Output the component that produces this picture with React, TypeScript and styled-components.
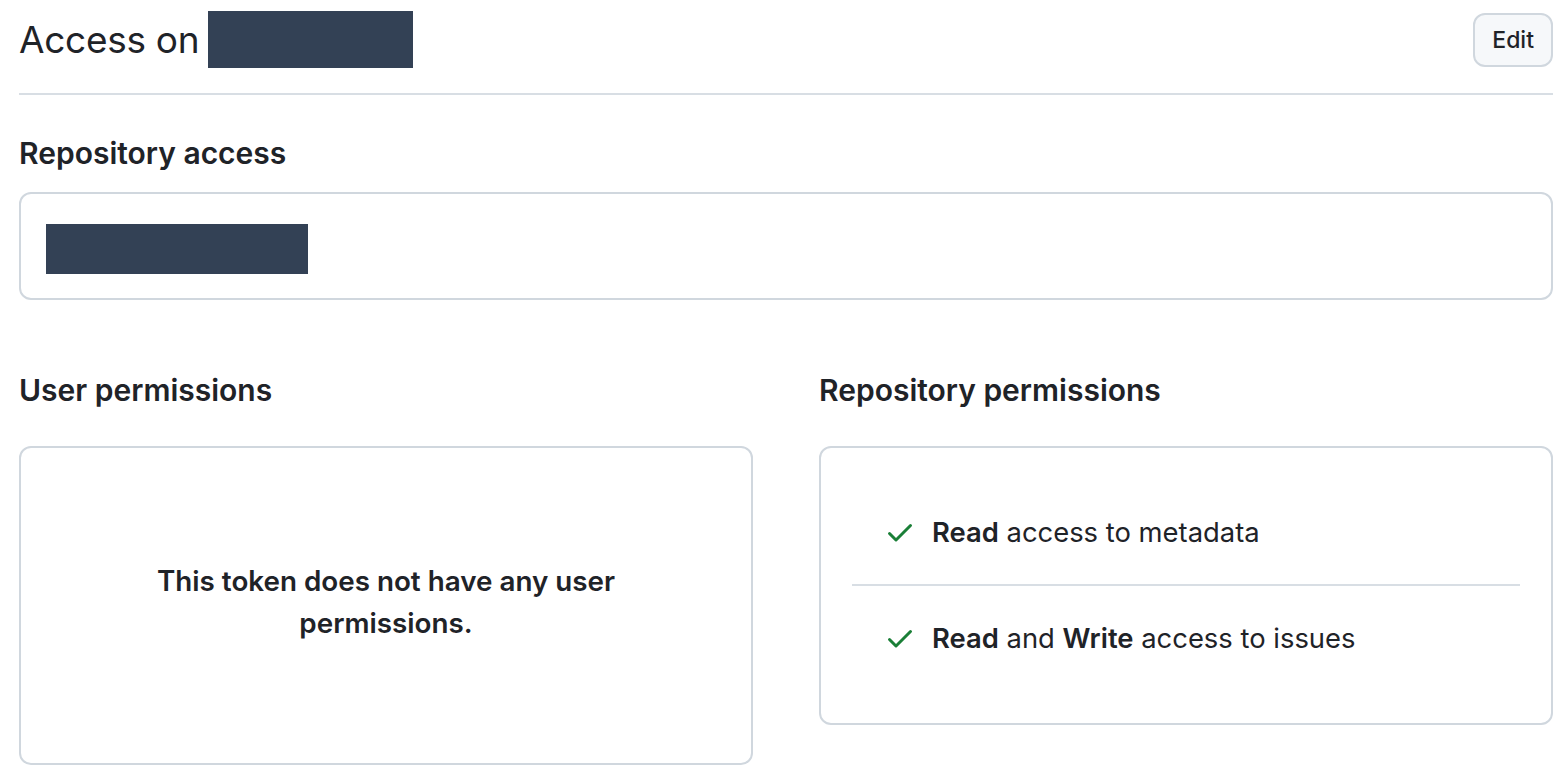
import React from 'react';
import styled, { createGlobalStyle } from 'styled-components';

const GlobalStyle = createGlobalStyle`
  body {
    margin: 0;
    background: #ffffff;
    color: #1f2328;
    font-family: Inter, "Liberation Sans", Arial, sans-serif;
  }
`;

const Page = styled.div`
  padding: 11px 15px 0 19px;
`;

const Header = styled.header`
  display: flex;
  align-items: center;
  justify-content: space-between;
  padding-bottom: 25px;
  border-bottom: 2px solid #d8dee4;
`;

const Title = styled.h1`
  display: flex;
  align-items: center;
  gap: 9px;
  margin: 0;
  font-size: 37px;
  font-weight: 400;
  letter-spacing: -0.3px;
`;

const Redacted = styled.span<{ $w: number; $h: number }>`
  display: block;
  width: ${(p) => p.$w}px;
  height: ${(p) => p.$h}px;
  background: #334155;
`;

const Button = styled.button`
  height: 54px;
  padding: 0 17px;
  border: 2px solid #d0d7de;
  border-radius: 12px;
  background: #f6f8fa;
  color: #1f2328;
  font-family: inherit;
  font-size: 23px;
  font-weight: 500;
`;

const Heading = styled.h2`
  margin: 0;
  font-size: 30px;
  line-height: 36px;
  font-weight: 600;
`;

const Section = styled.section<{ $top: number }>`
  margin-top: ${(p) => p.$top}px;
  display: flex;
  flex-direction: column;
  gap: 21px;
`;

const Box = styled.div`
  border: 2px solid #d0d7de;
  border-radius: 12px;
`;

const RepoBox = styled(Box)`
  padding: 30px 25px 24px;
`;

const Columns = styled.div`
  display: grid;
  grid-template-columns: 1fr 1fr;
  gap: 66px;
  margin-top: 72px;
`;

const Column = styled.div`
  display: flex;
  flex-direction: column;
  gap: 38px;
`;

const EmptyBox = styled(Box)`
  box-sizing: border-box;
  height: 319px;
  display: flex;
  align-items: center;
  justify-content: center;
  text-align: center;
  padding: 0 110px 8px;
  font-size: 27.8px;
  line-height: 42px;
  font-weight: 600;
`;

const List = styled(Box)`
  list-style: none;
  margin: 0;
  padding: 32px 31px 33px;
`;

const Item = styled.li`
  display: flex;
  align-items: center;
  gap: 16px;
  height: 104px;
  padding-left: 32px;
  font-size: 27.4px;
  & + & {
    border-top: 2px solid #d8dee4;
  }
  b {
    font-weight: 600;
  }
`;

const Check = () => (
  <svg width="32" height="32" viewBox="0 0 16 16" fill="#1a7f37" aria-hidden>
    <path d="M13.78 4.22a.75.75 0 0 1 0 1.06l-7.25 7.25a.75.75 0 0 1-1.06 0L2.22 9.28a.751.751 0 0 1 .018-1.042.751.751 0 0 1 1.042-.018L6 10.94l6.72-6.72a.75.75 0 0 1 1.06 0Z" />
  </svg>
);

export default function App() {
  return (
    <>
      <GlobalStyle />
      <Page>
        <Header>
          <Title>
            Access on <Redacted $w={205} $h={57} />
          </Title>
          <Button>Edit</Button>
        </Header>

        <Section $top={40}>
          <Heading>Repository access</Heading>
          <RepoBox>
            <Redacted $w={262} $h={50} />
          </RepoBox>
        </Section>

        <Columns>
          <Column>
            <Heading>User permissions</Heading>
            <EmptyBox>This token does not have any user permissions.</EmptyBox>
          </Column>
          <Column>
            <Heading>Repository permissions</Heading>
            <List as="ul">
              <Item>
                <Check />
                <span>
                  <b>Read</b> access to metadata
                </span>
              </Item>
              <Item>
                <Check />
                <span>
                  <b>Read</b> and <b>Write</b> access to issues
                </span>
              </Item>
            </List>
          </Column>
        </Columns>
      </Page>
    </>
  );
}
